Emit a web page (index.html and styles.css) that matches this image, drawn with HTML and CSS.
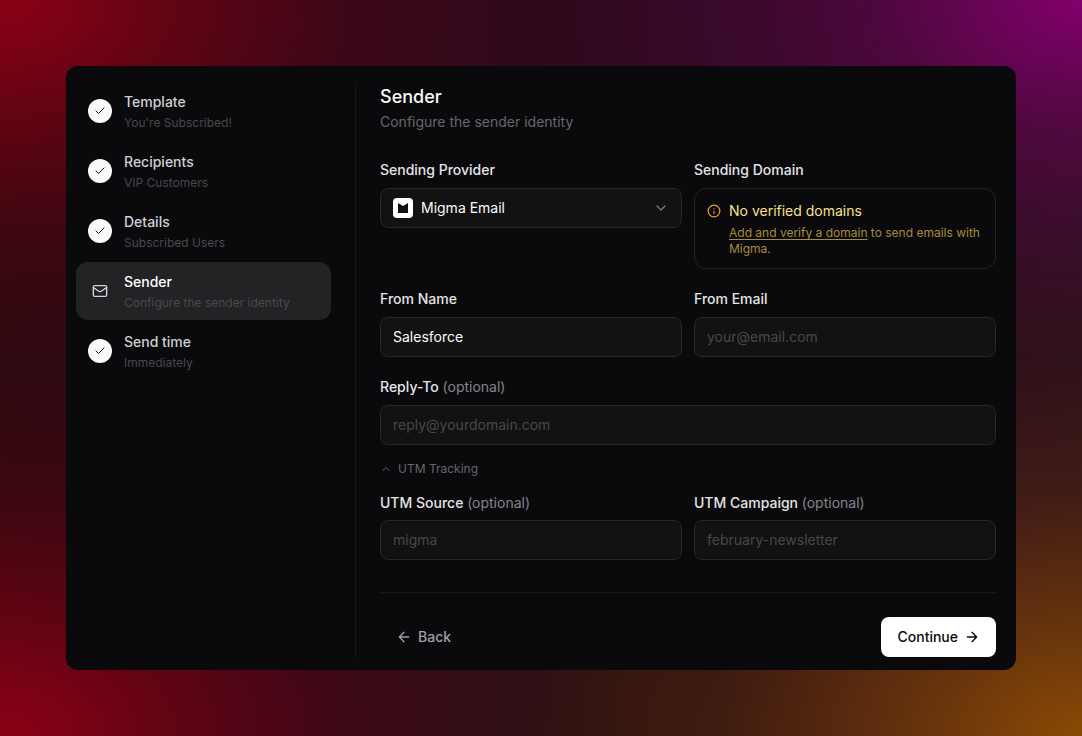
FILE: index.html
```html
<!DOCTYPE html>
<html lang="en">
<head>
    <meta charset="UTF-8">
    <meta name="viewport" content="width=device-width, initial-scale=1.0">
    <title>Sender</title>
    <link rel="stylesheet" href="styles.css">
</head>
<body>
    <!-- shared icons -->
    <svg class="sprite" aria-hidden="true">
        <symbol id="check" viewBox="0 0 24 24"><path d="M20 6 9 17l-5-5"/></symbol>
    </svg>

    <div class="card">
        <nav class="steps" aria-label="Campaign steps">
            <button type="button" class="step">
                <span class="step-icon done"><svg><use href="#check"/></svg></span>
                <span class="step-text">
                    <span class="step-title">Template</span>
                    <span class="step-sub">You're Subscribed!</span>
                </span>
            </button>
            <button type="button" class="step">
                <span class="step-icon done"><svg><use href="#check"/></svg></span>
                <span class="step-text">
                    <span class="step-title">Recipients</span>
                    <span class="step-sub">VIP Customers</span>
                </span>
            </button>
            <button type="button" class="step">
                <span class="step-icon done"><svg><use href="#check"/></svg></span>
                <span class="step-text">
                    <span class="step-title">Details</span>
                    <span class="step-sub">Subscribed Users</span>
                </span>
            </button>
            <button type="button" class="step active" aria-current="step">
                <span class="step-icon">
                    <svg viewBox="0 0 24 24"><rect x="2" y="4" width="20" height="16" rx="2"/><path d="m22 7-8.97 5.7a1.94 1.94 0 0 1-2.06 0L2 7"/></svg>
                </span>
                <span class="step-text">
                    <span class="step-title">Sender</span>
                    <span class="step-sub">Configure the sender identity</span>
                </span>
            </button>
            <button type="button" class="step">
                <span class="step-icon done"><svg><use href="#check"/></svg></span>
                <span class="step-text">
                    <span class="step-title">Send time</span>
                    <span class="step-sub">Immediately</span>
                </span>
            </button>
        </nav>

        <main class="panel">
            <header class="panel-header">
                <h1>Sender</h1>
                <p>Configure the sender identity</p>
            </header>

            <form class="form">
                <div class="row">
                    <div class="field">
                        <label for="provider">Sending Provider</label>
                        <div class="select-wrapper">
                            <select id="provider" class="control">
                                <option>Migma Email</option>
                            </select>
                            <svg class="provider-logo" viewBox="0 0 20 20">
                                <rect width="20" height="20" rx="4" fill="#fff"/>
                                <path d="M5 5l5 3 5-3v10H5z" fill="#111"/>
                            </svg>
                            <svg class="select-arrow" viewBox="0 0 24 24"><path d="m6 9 6 6 6-6"/></svg>
                        </div>
                    </div>
                    <div class="field">
                        <span class="label">Sending Domain</span>
                        <div class="alert" role="status">
                            <svg class="alert-icon" viewBox="0 0 24 24"><circle cx="12" cy="12" r="10"/><path d="M12 16v-4M12 8h.01"/></svg>
                            <div>
                                <p class="alert-title">No verified domains</p>
                                <p class="alert-text"><a href="#">Add and verify a domain</a> to send emails with Migma.</p>
                            </div>
                        </div>
                    </div>
                </div>

                <div class="row">
                    <div class="field">
                        <label for="from-name">From Name</label>
                        <input id="from-name" class="control" type="text" value="Salesforce">
                    </div>
                    <div class="field">
                        <label for="from-email">From Email</label>
                        <input id="from-email" class="control" type="email" placeholder="your@email.com">
                    </div>
                </div>

                <div class="field">
                    <label for="reply-to">Reply-To <span class="optional">(optional)</span></label>
                    <input id="reply-to" class="control" type="email" placeholder="reply@yourdomain.com">
                </div>

                <div class="utm">
                    <button type="button" class="utm-toggle" aria-expanded="true">
                        <svg viewBox="0 0 24 24"><path d="m18 15-6-6-6 6"/></svg>
                        UTM Tracking
                    </button>
                    <div class="row">
                        <div class="field">
                            <label for="utm-source">UTM Source <span class="optional">(optional)</span></label>
                            <input id="utm-source" class="control" type="text" placeholder="migma">
                        </div>
                        <div class="field">
                            <label for="utm-campaign">UTM Campaign <span class="optional">(optional)</span></label>
                            <input id="utm-campaign" class="control" type="text" placeholder="february-newsletter">
                        </div>
                    </div>
                </div>
            </form>

            <footer class="actions">
                <button type="button" class="btn btn-ghost">
                    <svg viewBox="0 0 24 24"><path d="m12 19-7-7 7-7M19 12H5"/></svg>
                    Back
                </button>
                <button type="button" class="btn btn-primary">
                    Continue
                    <svg viewBox="0 0 24 24"><path d="M5 12h14M12 5l7 7-7 7"/></svg>
                </button>
            </footer>
        </main>
    </div>
</body>
</html>
```
FILE: styles.css
```css
* {
    margin: 0;
    padding: 0;
    box-sizing: border-box;
}

body {
    min-height: 100vh;
    padding: 66px;
    display: flex;
    font-family: Inter, sans-serif;
    font-size: 14px;
    line-height: 20px;
    color: #e4e4e7;
    background:
        radial-gradient(ellipse at 0 0, #8c0015, #8c001580 12%, #8c001520 23%, #8c001500 34%),
        radial-gradient(ellipse at 100% 0, #82006c, #6a006080 13%, #5a006040 22%, #5a006000 34%),
        radial-gradient(ellipse at 0 100%, #8c0015, #8c001580 12%, #8c001520 23%, #8c001500 34%),
        radial-gradient(ellipse at 100% 100%, #8a4a04, #8a4a048c 12%, #8a4a0428 24%, #8a4a0400 36%),
        radial-gradient(ellipse at 60% 100%, #301410, #30141000 40%),
        linear-gradient(90deg, #30080f, #30081c 50%, #30121a);
}

button,
input,
select {
    font: inherit;
    color: inherit;
}

button {
    border: none;
    background: none;
    cursor: pointer;
}

svg {
    width: 16px;
    height: 16px;
    flex-shrink: 0;
    fill: none;
    stroke: currentColor;
    stroke-width: 2;
    stroke-linecap: round;
    stroke-linejoin: round;
}

.sprite {
    display: none;
}

.card {
    flex: 1;
    display: flex;
    padding: 16px 20px 13px 10px;
    border-radius: 12px;
    background: #0a0a0c;
}

/* Sidebar */
.steps {
    width: 280px;
    flex-shrink: 0;
    display: flex;
    flex-direction: column;
    gap: 2px;
    padding-right: 24px;
    border-right: 1px solid #18181b;
}

.step {
    display: flex;
    align-items: flex-start;
    gap: 12px;
    padding: 10px 12px 9px;
    border-radius: 12px;
    text-align: left;
}

.step.active {
    background: #232325;
}

.step-icon {
    width: 24px;
    height: 24px;
    margin-top: 7px;
    display: flex;
    align-items: center;
    justify-content: center;
    border-radius: 50%;
    color: #d4d4d8;
}

.step-icon.done {
    background: #fafafa;
    color: #09090b;
}

.step-icon.done svg {
    width: 12px;
    height: 12px;
}

.step-text {
    display: flex;
    flex-direction: column;
    gap: 3px;
}

.step-title {
    font-weight: 500;
    color: #d0d0d3;
}

.step.active .step-title {
    color: #fff;
}

.step-sub {
    font-size: 12px;
    line-height: 16px;
    color: #48484d;
}

/* Main panel */
.panel {
    flex: 1;
    min-width: 0;
    display: flex;
    flex-direction: column;
    padding-left: 24px;
}

.panel-header {
    margin-bottom: 28px;
    color: #66666c;
}

h1 {
    font-size: 18px;
    line-height: 30px;
    font-weight: 500;
    color: #fafafa;
}

.form {
    display: flex;
    flex-direction: column;
    gap: 20px;
}

.row {
    display: grid;
    grid-template-columns: 1fr 1fr;
    gap: 12px;
}

.field {
    display: flex;
    flex-direction: column;
    gap: 8px;
}

label,
.label {
    font-weight: 500;
}

.optional {
    font-weight: 400;
    color: #84848a;
}

.control {
    width: 100%;
    height: 40px;
    padding: 0 12px 2px;
    border: 1px solid #27272a;
    border-radius: 8px;
    background: #121212;
    color: #fafafa;
    outline: none;
}

.control:focus {
    border-color: #52525b;
}

.control::placeholder {
    color: #47474b;
}

.select-wrapper {
    position: relative;
}

select.control {
    appearance: none;
    padding: 0 40px;
}

.provider-logo,
.select-arrow {
    position: absolute;
    top: 50%;
    transform: translateY(-50%);
    pointer-events: none;
}

.provider-logo {
    left: 13px;
    width: 20px;
    height: 20px;
    stroke: none;
}

.select-arrow {
    right: 13px;
    color: #77777c;
}

.alert {
    display: flex;
    gap: 8px;
    padding: 12px 12px 11px;
    border: 1px solid #30200f;
    border-radius: 12px;
    color: #a88a3c;
}

.alert-icon {
    width: 14px;
    height: 14px;
    margin-top: 3px;
    color: #eca32c;
}

.alert-title {
    margin-bottom: 4px;
    color: #f9e08b;
}

.alert-text {
    font-size: 12px;
    line-height: 16px;
}

.alert-text a {
    color: inherit;
    text-underline-offset: 2px;
}

.utm {
    display: flex;
    flex-direction: column;
    gap: 16px;
    margin-top: -4px;
}

.utm .field {
    gap: 7px;
}

.utm-toggle {
    align-self: flex-start;
    display: flex;
    align-items: center;
    gap: 6px;
    font-size: 12px;
    line-height: 16px;
    color: #66666c;
}

.utm-toggle svg {
    width: 12px;
    height: 12px;
}

.actions {
    display: flex;
    justify-content: space-between;
    margin-top: auto;
    padding-top: 24px;
    border-top: 1px solid #18181b;
}

.btn {
    height: 40px;
    display: flex;
    align-items: center;
    gap: 6px;
    padding: 0 16px;
    border-radius: 8px;
    font-weight: 500;
}

.btn-ghost {
    color: #9f9fa9;
}

.btn-primary {
    background: #fff;
    color: #09090b;
}

@media (max-width: 800px) {
    body {
        padding: 20px;
    }

    .steps {
        display: none;
    }

    .row {
        grid-template-columns: 1fr;
    }
}
```
